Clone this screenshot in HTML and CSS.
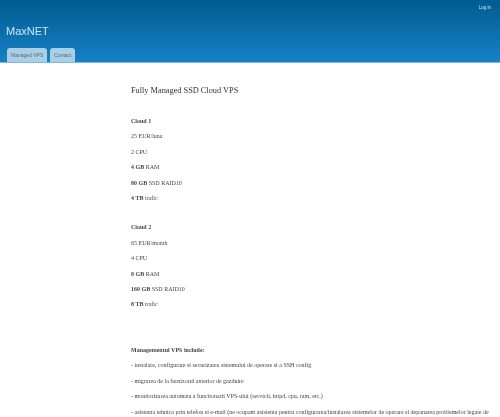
FILE: index.html
```html
<!DOCTYPE html>
<html lang="ro">
<head>
  <meta charset="UTF-8">
  <title>MaxNET</title>
  <link rel="stylesheet" href="styles.css">
</head>
<body>
  <div class="header">
    <div class="login"><a href="#">Log in</a></div>
    <div class="logo">MaxNET</div>
    <div class="tabs">
      <a class="tab" href="#">Managed VPS</a>
      <a class="tab" href="#">Contact</a>
    </div>
  </div>
  <div class="content">
    <h1>Fully Managed SSD Cloud VPS</h1>

    <div class="plan">
      <p><b>Cloud 1</b></p>
      <p>25 EUR/luna</p>
      <p>2 CPU</p>
      <p><b>4 GB</b> RAM</p>
      <p><b>80 GB</b> SSD RAID10</p>
      <p><b>4 TB</b> trafic</p>
    </div>

    <div class="plan">
      <p><b>Cloud 2</b></p>
      <p>65 EUR/month</p>
      <p>4 CPU</p>
      <p><b>8 GB</b> RAM</p>
      <p><b>160 GB</b> SSD RAID10</p>
      <p><b>8 TB</b> trafic</p>
    </div>

    <div class="includes">
      <p><b>Managementul VPS include:</b></p>
      <p>- instalare, configurare si securizarea sistemului de operare si a SSH config</p>
      <p>- migrarea de la furnizorul anterior de gazduire</p>
      <p>- monitorizarea automata a functionarii VPS-ului (servicii, httpd, cpu, ram, etc.)</p>
      <p>- asistenta tehnica prin telefon si e-mail (ne ocupam asistenta pentru configurarea/instalarea sistemelor de operare si depanarea problemelor legate de</p>
    </div>
  </div>
</body>
</html>
```

FILE: styles.css
```css
html, body {
  height: 100%;
}

body {
  margin: 0;
  background-color: white;
  font-family: "Liberation Serif", serif;
  color: #444;
  overflow: hidden;
}

.header {
  height: 62px;
  background: linear-gradient(#005c91, #1781c5);
  border-bottom: 1px solid #7db8de;
  display: flex;
  flex-direction: column;
}

.login {
  text-align: right;
  padding: 5px 9px 0 0;
  font-family: "Liberation Sans", sans-serif;
  font-size: 4.5px;
  line-height: 6px;
  filter: blur(0.4px);
}

.login a {
  color: #d6e8f5;
  text-decoration: none;
}

.logo {
  margin: 13px 0 0 6px;
  font-family: "Liberation Sans", sans-serif;
  font-size: 11px;
  line-height: 14px;
  color: #cfe6f5;
  filter: blur(0.4px);
}

.tabs {
  display: flex;
  gap: 3px;
  margin: auto 0 0 7px;
}

.tab {
  height: 14px;
  padding: 0 4px;
  background-color: #a9cfe8;
  border-radius: 3px 3px 0 0;
  font-family: "Liberation Sans", sans-serif;
  font-size: 5px;
  line-height: 15px;
  color: #666;
  text-decoration: none;
  filter: blur(0.4px);
}

.content {
  padding: 0 0 0 131px;
  filter: blur(0.6px);
}

h1 {
  margin: 22px 0 0;
  font-size: 8.3px;
  font-weight: normal;
  line-height: 12px;
  color: #333;
  white-space: nowrap;
}

.plan {
  margin-top: 17px;
}

.plan + .plan {
  margin-top: 14px;
}

.includes {
  margin-top: 30px;
}

p {
  margin: 0;
  font-size: 6px;
  line-height: 15.4px;
  white-space: nowrap;
}
```
